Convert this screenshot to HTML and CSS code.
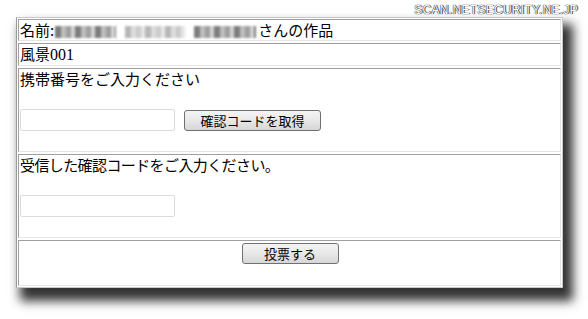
FILE: index.html
```html
<!DOCTYPE html>
<html lang="ja">
<head>
  <meta charset="UTF-8">
  <title>投票</title>
  <link rel="stylesheet" href="styles.css">
</head>
<body>
  <div class="mark">SCAN.NETSECURITY.NE.JP</div>

  <div class="panel">
    <div class="cell">名前:<span class="blur"><i class="w1"></i><i class="w2"></i><i class="w3"></i></span>さんの作品</div>
    <div class="cell">風景<span class="num">001</span></div>

    <!-- 携帯番号 -->
    <div class="cell block">
      <p>携帯番号をご入力ください</p>
      <div class="controls">
        <input type="text" class="field">
        <button type="button" class="btn btn-code">確認コードを取得</button>
      </div>
    </div>

    <!-- 確認コード -->
    <div class="cell block">
      <p class="tight">受信した確認コードをご入力ください。</p>
      <div class="controls">
        <input type="text" class="field">
      </div>
    </div>

    <div class="cell foot">
      <button type="button" class="btn btn-vote">投票する</button>
    </div>
  </div>
</body>
</html>
```

FILE: styles.css
```css
body { margin:0; background:#fff; font-family:"Liberation Serif", "Noto Sans CJK JP", serif; font-size:15px; color:#000; position:relative; height:319px; overflow:hidden; }
.mark { position:absolute; top:3px; right:10px; font-family:"Liberation Sans", sans-serif; font-size:12px; letter-spacing:0.3px; color:#fff; text-shadow:0 0 1px #222, 0 0 1px #222, 1px 0 0 #666; }
.panel { margin:17px 0 0 16px; width:543px; border:1px solid #c8c8c8; border-left-color:#9a9a9a; padding:1px; display:flex; flex-direction:column; gap:2px; background:#fff; box-shadow:7px 10px 10px 3px rgba(0,0,0,0.8); }
.cell { border:1px solid #e4e4e4; border-top-color:#a0a0a0; border-left-color:#a0a0a0; line-height:20px; padding:0 0 0 1px; font-family:"Noto Sans CJK JP", sans-serif; }
.num { font-family:"Liberation Serif", serif; font-size:16px; }
.blur { display:inline-flex; gap:9px; vertical-align:-2px; margin:0 2px 0 1px; filter:blur(0.9px); }
.blur i { display:block; height:12px; background:repeating-linear-gradient(90deg, #7e7e7e 0 6px, #bdbdbd 6px 11px, #a0a0a0 11px 16px, #d2d2d2 16px 20px); }
.blur .w1 { width:61px; }
.blur .w2 { width:60px; opacity:0.55; }
.blur .w3 { width:62px; }
.block { height:82px; }
.block p { margin:0; }
.block p.tight { letter-spacing:-0.6px; }
.controls { display:flex; align-items:center; gap:9px; margin-top:20px; }
.field { width:155px; height:22px; box-sizing:border-box; border:1px solid #d8dce0; border-radius:2px; padding:0; margin:0; }
.btn { height:21px; box-sizing:border-box; border:1px solid #707070; border-radius:3px; background:linear-gradient(#f4f4f4, #e8e8e8 50%, #d6d6d6); font-family:"Noto Sans CJK JP", sans-serif; font-size:13px; line-height:17px; padding:0; color:#000; }
.btn-code { width:137px; }
.foot { height:46px; display:flex; justify-content:center; align-items:flex-start; padding-top:2px; box-sizing:border-box; }
.btn-vote { width:97px; }
```
